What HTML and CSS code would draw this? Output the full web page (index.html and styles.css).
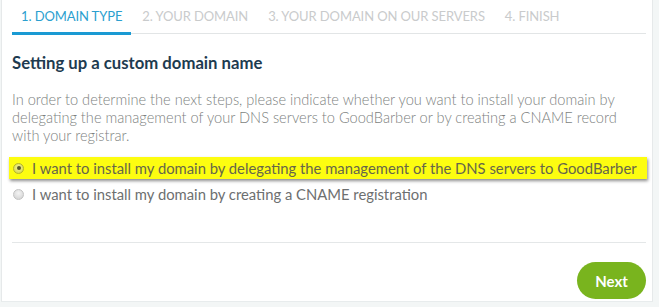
FILE: index.html
```html
<!DOCTYPE html>
<html>
<head>
<meta charset="utf-8">
<link rel="stylesheet" href="styles.css">
</head>
<body>
<div class="card">
  <nav class="tabs">
    <div class="tab active">1. DOMAIN TYPE</div>
    <div class="tab">2. YOUR DOMAIN</div>
    <div class="tab">3. YOUR DOMAIN ON OUR SERVERS</div>
    <div class="tab">4. FINISH</div>
  </nav>
  <h2 class="title">Setting up a custom domain name</h2>
  <p class="intro">In order to determine the next steps, please indicate whether you want to install your domain by delegating the management of your DNS servers to GoodBarber or by creating a CNAME record with your registrar.</p>
  <div class="options">
    <label class="option highlighted"><span class="radio checked"></span>I want to install my domain by delegating the management of the DNS servers to GoodBarber</label>
    <label class="option"><span class="radio"></span>I want to install my domain by creating a CNAME registration</label>
  </div>
  <hr class="sep">
  <div class="actions">
    <button class="next">Next</button>
  </div>
</div>
</body>
</html>
```

FILE: styles.css
```css
html, body {
  margin: 0;
  padding: 0;
  background: #f3f6f6;
  font-family: Lato, "Open Sans", sans-serif;
}
.card {
  width: 652px;
  height: 302px;
  box-sizing: border-box;
  background: #fff;
  border-left: 1px solid #e6e9ea;
  border-right: 1px solid #e6e9ea;
  border-bottom: 1px solid #e8eced;
  margin-left: 1px;
  padding: 0 6px 0 10px;
}
.tabs {
  display: flex;
  border-bottom: 1px solid #e2e5e6;
  height: 34px;
  box-sizing: border-box;
}
.tab {
  padding: 8px 9px 0 9px;
  margin-right: 2px;
  font-size: 13px;
  color: #c9cbcc;
  letter-spacing: -0.1px;
}
.tab.active {
  color: #2b9fcf;
  border-bottom: 3px solid #1a9ad3;
  margin-bottom: -2px;
}
.title {
  margin: 18px 0 0 0;
  font-size: 16.7px;
  font-weight: 700;
  color: #1e3b50;
  line-height: 22px;
}
.intro {
  margin: 17px 0 0 0;
  font-size: 14.6px;
  font-weight: 300;
  line-height: 18px;
  color: #7d7f80;
}
.options {
  margin-top: 12px;
  display: flex;
  flex-direction: column;
}
.option {
  display: flex;
  align-items: center;
  font-size: 14.8px;
  color: #6d6f70;
  height: 22px;
}
.option.highlighted {
  background: #fdfd10;
  margin-left: -3px;
  padding-left: 3px;
  width: 635px;
  box-shadow: 1px 2px 3px rgba(0,0,0,0.45);
  color: #66664a;
  margin-bottom: 4px;
}
.radio {
  width: 9px;
  height: 9px;
  border-radius: 50%;
  border: 1px solid #c3c3c3;
  background: radial-gradient(circle at 50% 35%, #f4f4f4, #cfcfcf);
  margin: 0 8px 0 1px;
  box-sizing: content-box;
  position: relative;
}
.radio.checked {
  border-color: #b5b52a;
  background: radial-gradient(circle at 50% 40%, #f4f4a0, #d2d23a);
}
.radio.checked::after {
  content: "";
  position: absolute;
  left: 2.5px;
  top: 2.5px;
  width: 4px;
  height: 4px;
  border-radius: 50%;
  background: #55552a;
}
.sep {
  border: 0;
  border-top: 1px solid #e4e7e8;
  margin: 37px 0 0 0;
}
.actions {
  display: flex;
  justify-content: flex-end;
  margin-top: 19px;
}
.next {
  width: 69px;
  height: 37px;
  border: 0;
  border-radius: 19px;
  background: #79b41e;
  color: #fff;
  font-family: Lato, sans-serif;
  font-size: 15px;
  font-weight: 700;
  padding: 0;
}
```
